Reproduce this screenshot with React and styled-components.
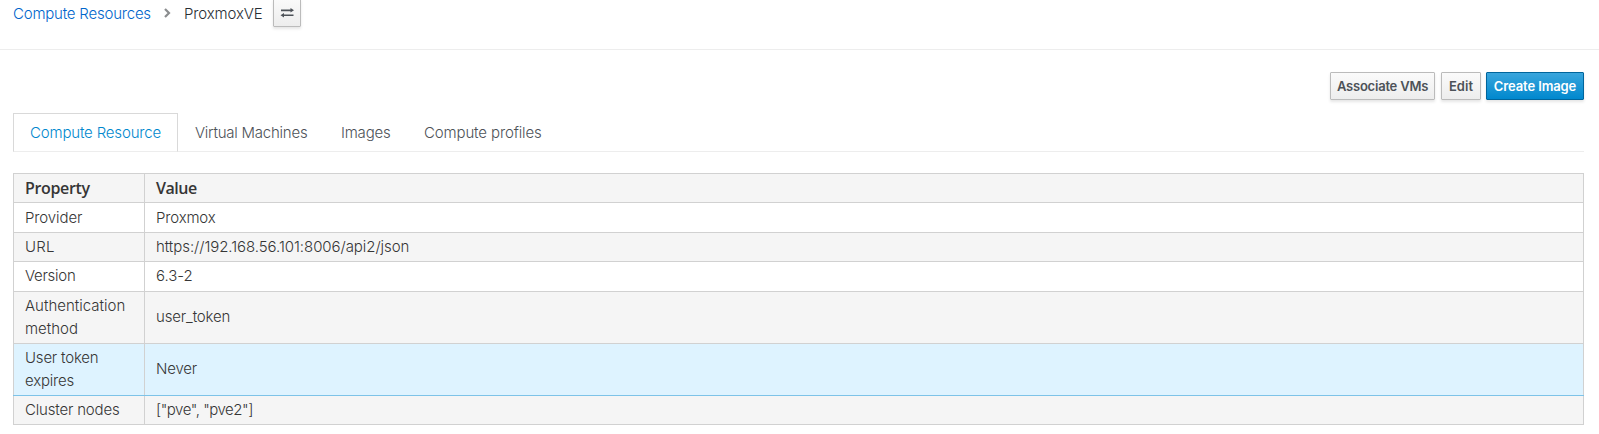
import React from "react";
import styled, { createGlobalStyle, css } from "styled-components";

const GlobalStyle = createGlobalStyle`
  * { box-sizing: border-box; }
  body {
    margin: 0;
    background: #fff;
    color: #363636;
    font: 350 15px/23px Inter, "Open Sans", sans-serif;
  }
`;

const Page = styled.div`
  height: 434px;
  overflow: hidden;
`;

const Text = styled.span`
  letter-spacing: ${(p) => p.$spacing || 0}px;
`;

const Breadcrumb = styled.nav`
  display: flex;
  align-items: flex-start;
  height: 50px;
  padding: 2px 13px 0;
  border-bottom: 1px solid #ededed;
  white-space: nowrap;
`;

const Crumb = styled.a`
  width: 150px;
  color: #0066cc;
  text-decoration: none;
`;

const Chevron = styled.svg`
  flex: none;
  width: 8px;
  height: 10px;
  margin: 6px 13px 0 0;
`;

const Current = styled.span`
  width: 89px;
  color: #292e34;
`;

const buttonBase = css`
  display: flex;
  align-items: center;
  justify-content: center;
  height: 28px;
  padding: 0;
  border: 1px solid #bbb;
  border-radius: 1px;
  background: linear-gradient(#fafafa, #ededed);
  box-shadow: 0 2px 3px rgba(3, 3, 3, 0.1);
  color: #4d5258;
`;

const SwitchButton = styled.button`
  ${buttonBase}
  width: 28px;
  margin-top: -3px;
`;

const Actions = styled.div`
  display: flex;
  justify-content: flex-end;
  height: 63px;
  padding: 22px 15px 0 0;
`;

const Button = styled.button`
  ${buttonBase}
  width: ${(p) => p.$width}px;
  margin-left: ${(p) => p.$gap || 0}px;
  font: 570 13px/20px Inter, sans-serif;
  white-space: nowrap;
  ${(p) =>
    p.$primary &&
    css`
      border-color: #00659c;
      background: linear-gradient(#39a5dc, #0088ce);
      color: #fff;
    `}
`;

const Tabs = styled.div`
  display: flex;
  height: 39px;
  margin: 0 15px 0 13px;
  border-bottom: 1px solid #ededed;
`;

const Tab = styled.div`
  height: 39px;
  padding: 8px 0 0 17px;
  width: ${(p) => p.$width}px;
  color: #4d5258;
  white-space: nowrap;
  ${(p) =>
    p.$active &&
    css`
      border: 1px solid #d9d9d9;
      border-bottom-color: #ededed;
      padding: 7px 0 0 16px;
      color: #0088ce;
    `}
`;

const Table = styled.table`
  width: 1571px;
  margin: 21px 0 0 13px;
  table-layout: fixed;
  border-collapse: collapse;
`;

const Tr = styled.tr`
  height: ${(p) => p.$height}px;
  background: ${(p) => (p.$hover ? "#def3ff" : p.$striped ? "#f5f5f5" : "#fff")};
  ${(p) => p.$hover && "td { border-bottom-color: #7dc3e8; }"}
  ${(p) => p.$afterHover && "td { border-top-color: #7dc3e8; }"}
`;

const cell = css`
  padding: 0 11px;
  border: 1px solid #d1d1d1;
  text-align: left;
  vertical-align: middle;
`;

const Th = styled.th`
  ${cell}
  width: ${(p) => p.$width || "auto"};
  font: 600 16px/23px "Open Sans", sans-serif;
`;

const Td = styled.td`
  ${cell}
  padding-bottom: 2px;

  tr:first-child > & {
    padding-bottom: 0;
  }
`;

const tabs = [
  { label: "Compute Resource", width: 165, spacing: -0.17 },
  { label: "Virtual Machines", width: 146, spacing: -0.24 },
  { label: "Images", width: 83, spacing: -0.2 },
  { label: "Compute profiles", width: 150, spacing: -0.13 },
];

const rows = [
  { name: "Provider", ns: -0.1, value: "Proxmox", vs: -0.16, height: 30 },
  { name: "URL", ns: 0.2, value: "https://192.168.56.101:8006/api2/json", vs: -0.06, height: 29 },
  { name: "Version", ns: -0.27, value: "6.3-2", vs: -0.05, height: 30 },
  { name: "Authentication method", ns: 0, value: "user_token", vs: -0.15, height: 52 },
  { name: "User token expires", ns: -0.2, value: "Never", vs: -0.2, height: 52, hover: true },
  { name: "Cluster nodes", ns: -0.18, value: '["pve", "pve2"]', vs: -0.48, height: 29, afterHover: true },
];

export default function App() {
  return (
    <Page>
      <GlobalStyle />
      <Breadcrumb>
        <Crumb><Text $spacing={-0.21}>Compute Resources</Text></Crumb>
        <Chevron viewBox="0 0 8 10">
          <path d="M2 1l4 4-4 4" fill="none" stroke="#8b8d8f" strokeWidth="2.2" />
        </Chevron>
        <Current><Text $spacing={-0.13}>ProxmoxVE</Text></Current>
        <SwitchButton>
          <svg width="14" height="10" viewBox="0 0 14 10" fill="#4d5258">
            <path d="M1 1.5h9.5V0L14 2.3l-3.5 2.3V3.2H1zM13.5 6.4H4V5L.5 7.3 4 9.6V8.1h9.5z" />
          </svg>
        </SwitchButton>
      </Breadcrumb>
      <Actions>
        <Button $width={105}><Text $spacing={-0.22}>Associate VMs</Text></Button>
        <Button $width={40} $gap={6}>Edit</Button>
        <Button $width={98} $gap={5} $primary><Text $spacing={-0.12}>Create Image</Text></Button>
      </Actions>
      <Tabs>
        {tabs.map((t, i) => (
          <Tab key={t.label} $width={t.width} $active={i === 0}>
            <Text $spacing={t.spacing}>{t.label}</Text>
          </Tab>
        ))}
      </Tabs>
      <Table>
        <thead>
          <Tr $height={29} $striped>
            <Th $width="131px"><Text $spacing={-0.36}>Property</Text></Th>
            <Th><Text $spacing={-0.5}>Value</Text></Th>
          </Tr>
        </thead>
        <tbody>
          {rows.map((r, i) => (
            <Tr key={r.name} $height={r.height} $striped={i % 2 === 1} $hover={r.hover} $afterHover={r.afterHover}>
              <Td><Text $spacing={r.ns}>{r.name}</Text></Td>
              <Td><Text $spacing={r.vs}>{r.value}</Text></Td>
            </Tr>
          ))}
        </tbody>
      </Table>
    </Page>
  );
}
